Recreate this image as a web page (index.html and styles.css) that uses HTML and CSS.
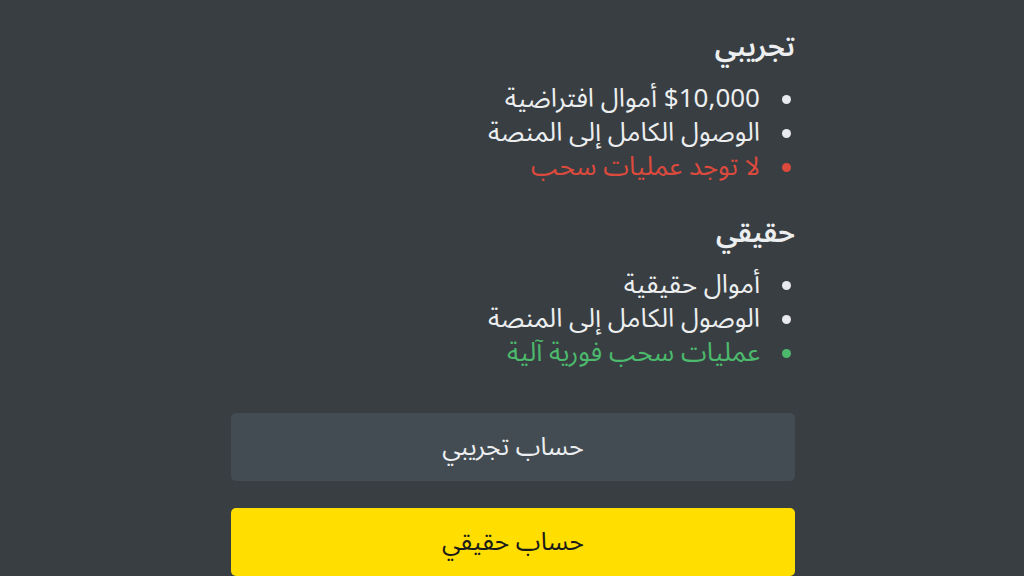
FILE: index.html
```html
<!DOCTYPE html>
<html lang="ar" dir="rtl">
<head>
<meta charset="utf-8">
<link rel="stylesheet" href="styles.css">
</head>
<body>
<main class="panel">
  <section class="plan">
    <h2 class="plan-title">تجريبي</h2>
    <ul class="features">
      <li>‏$10,000 أموال افتراضية</li>
      <li>الوصول الكامل إلى المنصة</li>
      <li class="bad">لا توجد عمليات سحب</li>
    </ul>
  </section>
  <section class="plan">
    <h2 class="plan-title">حقيقي</h2>
    <ul class="features">
      <li>أموال حقيقية</li>
      <li>الوصول الكامل إلى المنصة</li>
      <li class="good">عمليات سحب فورية آلية</li>
    </ul>
  </section>
  <div class="actions">
    <button class="btn btn-demo">حساب تجريبي</button>
    <button class="btn btn-real">حساب حقيقي</button>
  </div>
</main>
</body>
</html>
```
FILE: styles.css
```css
html, body {
  margin: 0;
  padding: 0;
  height: 100%;
  background: #383e42;
  overflow: hidden;
}
body {
  font-family: "Noto Sans Arabic", "Noto Sans", "DejaVu Sans", sans-serif;
  color: #eceef0;
}
.panel {
  width: 564px;
  margin: 0 auto;
  padding-top: 30px;
  box-sizing: border-box;
  position: relative;
  left: 1px;
}
.plan + .plan {
  margin-top: 32px;
}
.plan-title {
  margin: 0 0 16px;
  font-size: 28px;
  font-weight: 600;
  line-height: 36px;
}
.features {
  list-style: none;
  margin: 0;
  padding: 0 35px 0 0;
}
.features li {
  position: relative;
  font-size: 26px;
  line-height: 34px;
}
.features li::before {
  content: "";
  position: absolute;
  right: -31px;
  top: 13px;
  width: 9px;
  height: 9px;
  border-radius: 50%;
  background: #e8eaed;
}
.features li.bad { color: #dc4a3d; }
.features li.bad::before { background: #dc4a3d; }
.features li.good { color: #4cb96c; }
.features li.good::before { background: #4cb96c; }
.actions {
  display: flex;
  flex-direction: column;
  gap: 27px;
  margin-top: 43px;
}
.btn {
  display: block;
  width: 100%;
  height: 68px;
  border: none;
  border-radius: 5px;
  font-family: inherit;
  font-size: 25px;
}
.btn-demo {
  background: #434c53;
  color: #eceef0;
}
.btn-real {
  background: #ffde00;
  color: #1a1a1a;
}
```
